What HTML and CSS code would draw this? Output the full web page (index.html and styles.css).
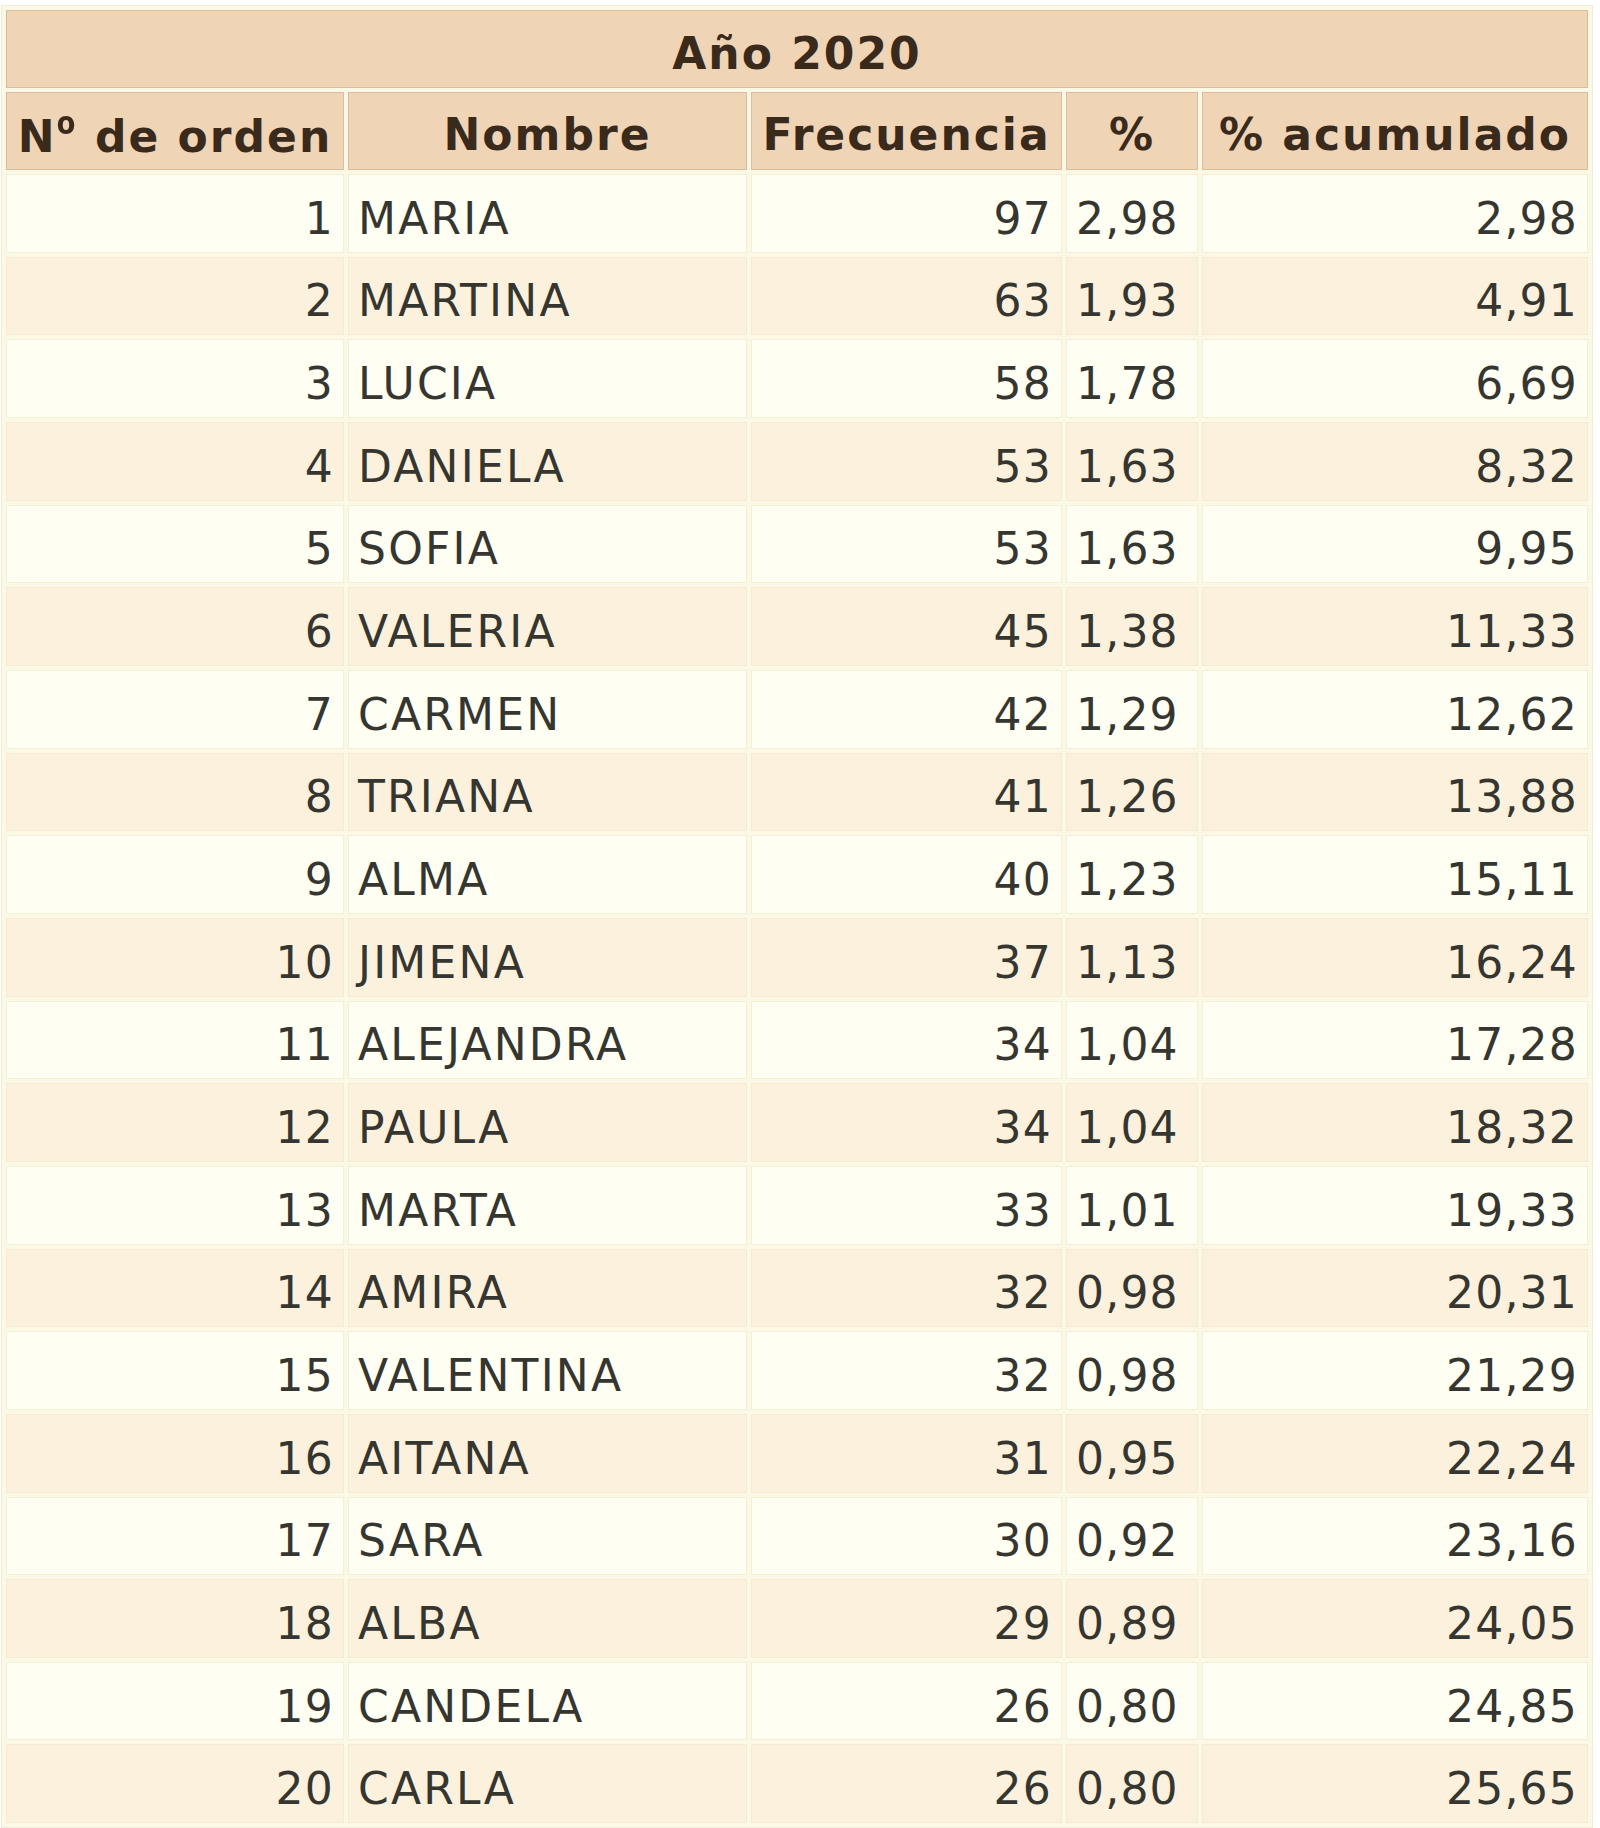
FILE: index.html
```html
<!DOCTYPE html>
<html lang="es">
<head>
<meta charset="utf-8">
<title>Año 2020</title>
<link rel="stylesheet" href="styles.css">
</head>
<body>
<table class="names">
  <colgroup>
    <col class="c-order">
    <col class="c-name">
    <col class="c-freq">
    <col class="c-pct">
    <col class="c-acc">
  </colgroup>
  <thead>
    <tr class="title-row"><th colspan="5">Año 2020</th></tr>
    <tr class="head-row">
      <th>N<span class="ord">º</span> de orden</th>
      <th>Nombre</th>
      <th>Frecuencia</th>
      <th>%</th>
      <th class="acc-head">% acumulado</th>
    </tr>
  </thead>
  <tbody>
    <tr><td class="num">1</td><td class="name">MARIA</td><td class="num">97</td><td class="pct">2,98</td><td class="num">2,98</td></tr>
    <tr><td class="num">2</td><td class="name">MARTINA</td><td class="num">63</td><td class="pct">1,93</td><td class="num">4,91</td></tr>
    <tr><td class="num">3</td><td class="name">LUCIA</td><td class="num">58</td><td class="pct">1,78</td><td class="num">6,69</td></tr>
    <tr><td class="num">4</td><td class="name">DANIELA</td><td class="num">53</td><td class="pct">1,63</td><td class="num">8,32</td></tr>
    <tr><td class="num">5</td><td class="name">SOFIA</td><td class="num">53</td><td class="pct">1,63</td><td class="num">9,95</td></tr>
    <tr><td class="num">6</td><td class="name">VALERIA</td><td class="num">45</td><td class="pct">1,38</td><td class="num">11,33</td></tr>
    <tr><td class="num">7</td><td class="name">CARMEN</td><td class="num">42</td><td class="pct">1,29</td><td class="num">12,62</td></tr>
    <tr><td class="num">8</td><td class="name">TRIANA</td><td class="num">41</td><td class="pct">1,26</td><td class="num">13,88</td></tr>
    <tr><td class="num">9</td><td class="name">ALMA</td><td class="num">40</td><td class="pct">1,23</td><td class="num">15,11</td></tr>
    <tr><td class="num">10</td><td class="name">JIMENA</td><td class="num">37</td><td class="pct">1,13</td><td class="num">16,24</td></tr>
    <tr><td class="num">11</td><td class="name">ALEJANDRA</td><td class="num">34</td><td class="pct">1,04</td><td class="num">17,28</td></tr>
    <tr><td class="num">12</td><td class="name">PAULA</td><td class="num">34</td><td class="pct">1,04</td><td class="num">18,32</td></tr>
    <tr><td class="num">13</td><td class="name">MARTA</td><td class="num">33</td><td class="pct">1,01</td><td class="num">19,33</td></tr>
    <tr><td class="num">14</td><td class="name">AMIRA</td><td class="num">32</td><td class="pct">0,98</td><td class="num">20,31</td></tr>
    <tr><td class="num">15</td><td class="name">VALENTINA</td><td class="num">32</td><td class="pct">0,98</td><td class="num">21,29</td></tr>
    <tr><td class="num">16</td><td class="name">AITANA</td><td class="num">31</td><td class="pct">0,95</td><td class="num">22,24</td></tr>
    <tr><td class="num">17</td><td class="name">SARA</td><td class="num">30</td><td class="pct">0,92</td><td class="num">23,16</td></tr>
    <tr><td class="num">18</td><td class="name">ALBA</td><td class="num">29</td><td class="pct">0,89</td><td class="num">24,05</td></tr>
    <tr><td class="num">19</td><td class="name">CANDELA</td><td class="num">26</td><td class="pct">0,80</td><td class="num">24,85</td></tr>
    <tr><td class="num">20</td><td class="name">CARLA</td><td class="num">26</td><td class="pct">0,80</td><td class="num">25,65</td></tr>
  </tbody>
</table>
</body>
</html>
```

FILE: styles.css
```css
html, body {
  margin: 0;
  padding: 0;
  background: #ffffff;
  overflow: hidden;
}

body {
  font-family: "DejaVu Sans", Verdana, sans-serif;
  color: #363630;
}

.names {
  margin: 5px 0 0 1px;
  table-layout: fixed;
  width: 1592px;
  border-collapse: separate;
  border-spacing: 4px;
  border: 1px solid #f1ecd6;
  background: #fbf8e6;
  font-size: 44px;
}

.c-order { width: 338px; }
.c-name { width: 399px; }
.c-freq { width: 311px; }
.c-pct { width: 132px; }
.c-acc { width: 386px; }

.names th,
.names td {
  box-sizing: border-box;
  white-space: nowrap;
}

.names th {
  background: #efd4b6;
  border: 1px solid #d8bd9f;
  color: #3a2a1c;
  font-weight: bold;
  letter-spacing: 2px;
  text-align: center;
  vertical-align: middle;
  padding: 8px 2px 0;
}

.ord {
  font-family: "Noto Sans", "Open Sans", sans-serif;
  font-weight: bold;
  font-size: 1.12em;
  line-height: 1;
}

.acc-head {
  letter-spacing: 2.6px;
}

.title-row th {
  height: 78px;
}

.head-row th {
  height: 78px;
  padding-top: 7px;
}

.names td {
  height: 78.67px;
  padding: 10px 9px 0;
  vertical-align: middle;
  border: 1px solid #f3f0d8;
  background: #fefef3;
}

.names tbody tr:nth-child(even) td {
  background: #fcf1dd;
  border-color: #f6ebd0;
}

.num {
  text-align: right;
  letter-spacing: 1.2px;
}

.pct {
  text-align: left;
  letter-spacing: 1.2px;
  padding-left: 11px;
}

.name {
  text-align: left;
  letter-spacing: 2.2px;
}
```
